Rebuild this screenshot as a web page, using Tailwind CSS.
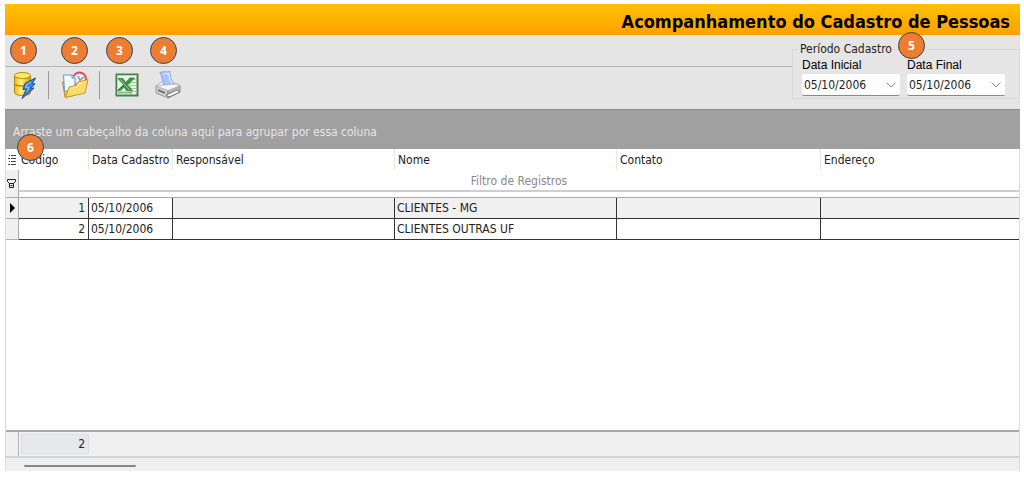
<!DOCTYPE html>
<html lang="pt-BR">
<head>
<meta charset="utf-8">
<meta name="viewport" content="width=device-width, initial-scale=1">
<title>Acompanhamento do Cadastro de Pessoas</title>
<script src="https://cdn.jsdelivr.net/npm/@tailwindcss/browser@4"></script>
</head>
<body class="bg-white font-['Tahoma','DejaVu_Sans_Condensed','Noto_Sans',sans-serif] text-xs text-[#222]">
<div class="flex min-h-screen flex-col pt-1 pr-1 pb-1.5 pl-[5px]">

  <header class="flex h-[31px] items-center justify-end bg-linear-to-b from-[#ffc000] to-[#ffa000] pr-2.5">
    <h1 class="pt-1 text-lg font-bold text-black">Acompanhamento do Cadastro de Pessoas</h1>
  </header>

  <div class="flex h-[74px] bg-[#e5e5e5]">
    <div class="flex-1 pt-[31px]">
      <div class="flex items-center border-t border-[#b4b4b4] pt-1 pl-[5px]" role="toolbar" aria-label="Ações">
        <button type="button" class="relative size-7" aria-label="Atualizar dados">
          <span class="absolute -top-8.5 left-0 flex size-[27px] items-center justify-center rounded-full border border-[#34405a] bg-[#ed7d31] font-['Open_Sans',sans-serif] text-xs font-bold text-white">1</span>
          <svg viewBox="0 0 28 28" class="size-7">
            <defs><linearGradient id="gold" x1="0" x2="1"><stop offset="0" stop-color="#f2b707"/><stop offset=".4" stop-color="#fff08a"/><stop offset="1" stop-color="#d99b00"/></linearGradient></defs>
            <path d="M4.500 4.500v8c0 3 16 3 16 0v-8" fill="url(#gold)" stroke="#b8860b"/>
            <path d="M4.500 13v8.500c0 4 16 4 16 0V13c0 3-16 3-16 0z" fill="url(#gold)" stroke="#b8860b"/>
            <ellipse cx="12.500" cy="4.500" rx="8" ry="3" fill="#ffe96a" stroke="#b8860b"/>
            <path d="M25.500 7 15 12.500l-2 6 3.500-.5-4.500 9.500L24 17l-3.500.3 4.500-4.500-3 .2z" fill="#3d86e0" stroke="#174a9c" stroke-linejoin="round"/>
            <path d="m21 11-4.500 2.500-1 3 3.500-.5-2.500 5" fill="none" stroke="#92c9ff"/>
          </svg>
        </button>
        <span class="mr-3 ml-2.5 h-7 w-px bg-[#999]"></span>
        <button type="button" class="relative size-7" aria-label="Abrir pesquisa">
          <span class="absolute -top-8.5 left-0 flex size-[27px] items-center justify-center rounded-full border border-[#34405a] bg-[#ed7d31] font-['Open_Sans',sans-serif] text-xs font-bold text-white">2</span>
          <svg viewBox="0 0 28 28" class="size-7">
            <path d="M1.500 11 4 26h3l4-13z" fill="#f3c743" stroke="#c18c16"/>
            <circle cx="18.500" cy="8" r="6.500" fill="#e8f0f8" stroke="#df4b4b" stroke-width="2"/>
            <path d="m17 5 2 4 4-3" fill="none" stroke="#8a98aa" stroke-width="1.500"/>
            <path d="M2.500 4h8.500l3 3V20H3.500z" fill="#f5faff" stroke="#6a94ce"/>
            <path d="M11 4v3h3" fill="#b9d4f5" stroke="#6a94ce"/>
            <path d="M4.500 26.500 8 16l7-1.500L17 11l10-2.500-3 13.500z" fill="#fbdb6a" stroke="#c99620" stroke-linejoin="round"/>
            <path d="m9.500 17.500 6.500-1.500 2-3.500 7-2" fill="none" stroke="#fff1a8"/>
          </svg>
        </button>
        <span class="mr-3 ml-2.5 h-7 w-px bg-[#999]"></span>
        <button type="button" class="relative size-7" aria-label="Exportar para Excel">
          <span class="absolute -top-8.5 -left-1.5 flex size-[27px] items-center justify-center rounded-full border border-[#34405a] bg-[#ed7d31] font-['Open_Sans',sans-serif] text-xs font-bold text-white">3</span>
          <svg viewBox="0 0 28 28" class="size-7">
            <rect x="4.500" y="3.500" width="21" height="21" fill="#e9f3e4" stroke="#47804c" stroke-width="2"/>
            <path d="M5.500 23.500v-19h19" fill="none" stroke="#b9d5b5"/>
            <path d="M18 6v17M18 8.500h6M18 11.500h6M18 14.500h6M18 17.500h6M18 20.500h6" stroke="#a7c9a0"/>
            <path d="M6 21.500h14" stroke="#8db887" stroke-width="2"/>
            <path d="M6 7.500h5l2.500 4 4.500-4.500h4.500l-7 7 5 5.500h-6l-2.500-3.500-3.500 3.500H5.500l6-6z" fill="#3d9148" stroke="#2f7a3a" stroke-width=".7"/>
            <path d="m8.500 8.500 9 10.500" stroke="#92c991"/>
          </svg>
        </button>
        <button type="button" class="relative ml-3.5 size-7" aria-label="Imprimir">
          <span class="absolute -top-8.5 -left-1 flex size-[27px] items-center justify-center rounded-full border border-[#34405a] bg-[#ed7d31] font-['Open_Sans',sans-serif] text-xs font-bold text-white">4</span>
          <svg viewBox="0 0 28 28" class="size-7">
            <path d="m2 15 7-5 16 3 1 3-12 5z" fill="#ececec" stroke="#bbb"/>
            <path d="M6 1.500c4-1.500 6 0 10-1 0 5 1 8 4 12.500l-10 1c-2-3-1-8-4-12.500z" fill="#a9c3fa" stroke="#8ba5e6"/>
            <path d="M9 3c3-1 4 0 6-.5 0 4 1 7 3 10" fill="none" stroke="#d8e6ff" stroke-width="1.500"/>
            <path d="m2 15 12 4v8L2 22z" fill="#cdcdcd" stroke="#999"/>
            <path d="m14 19 12-4v6l-12 6z" fill="#b4b4b4" stroke="#888"/>
            <path d="m2 15 8-1 10-1 6 2-12 4.500z" fill="#f4f4f4" stroke="#aaa" stroke-width=".7"/>
            <path d="m12 24 11-5 3 2-11 5z" fill="#fafafa" stroke="#777"/>
            <path d="m4 19 7 3" stroke="#666" stroke-width="1.500"/>
          </svg>
        </button>
      </div>
    </div>

    <fieldset class="relative mt-[7px] h-[57px] w-[228px] border border-[#d9d9d9] pl-[9px]">
      <legend class="-ml-1 px-0.5 text-xs leading-[14px]">Período Cadastro</legend>
      <span class="absolute -top-6 left-[105px] flex size-[27px] items-center justify-center rounded-full border border-[#34405a] bg-[#ed7d31] font-['Open_Sans',sans-serif] text-xs font-bold text-white">5</span>
      <div class="flex gap-[7px]">
        <div class="w-[98px]">
          <label for="inicial" class="block font-['Liberation_Sans',sans-serif] leading-[18px] text-black">Data Inicial</label>
          <div class="relative">
            <select id="inicial" class="block h-[22px] w-full appearance-none rounded-xs border-b border-[#888] bg-white pl-0.5 text-xs"><option>05/10/2006</option></select>
            <svg viewBox="0 0 10 6" class="pointer-events-none absolute top-2 right-1 h-1.5 w-2.5" fill="none" stroke="#888"><path d="m.5.5 4.500 4.500L9.500.5"/></svg>
          </div>
        </div>
        <div class="w-[98px]">
          <label for="final" class="block font-['Liberation_Sans',sans-serif] leading-[18px] text-black">Data Final</label>
          <div class="relative">
            <select id="final" class="block h-[22px] w-full appearance-none rounded-xs border-b border-[#888] bg-white pl-0.5 text-xs"><option>05/10/2006</option></select>
            <svg viewBox="0 0 10 6" class="pointer-events-none absolute top-2 right-1 h-1.5 w-2.5" fill="none" stroke="#888"><path d="m.5.5 4.500 4.500L9.500.5"/></svg>
          </div>
        </div>
      </div>
    </fieldset>
  </div>

  <div class="relative flex h-10 items-center border-t border-[#8e8e96] bg-[#a0a0a0] pt-1 pl-2 text-[#e6e6e6]">
    Arraste um cabeçalho da coluna aqui para agrupar por essa coluna
    <span class="absolute top-6 left-3 flex size-[27px] items-center justify-center rounded-full border border-[#34405a] bg-[#ed7d31] font-['Open_Sans',sans-serif] text-xs font-bold text-white">6</span>
  </div>

  <div class="flex flex-1 flex-col border-x border-[#dcdcdc]">
    <div class="flex-1">
      <table class="w-full table-fixed border-separate border-spacing-0">
        <colgroup><col class="w-[13px]"><col class="w-[70px]"><col class="w-[84px]"><col class="w-[222px]"><col class="w-[222px]"><col class="w-[204px]"><col></colgroup>
        <thead>
          <tr class="h-[21px] text-left">
            <td class="p-0"><svg viewBox="0 0 12 12" class="h-3 w-3" stroke="#444"><path d="M3 1.500h1M2 4.500h2M3 7.500h1M2 10.500h2M5 1.500h5M5 4.500h5M5 7.500h5M5 10.500h5"/></svg></td>
            <th scope="col" class="border-r border-[#e6e6e6] p-0 pl-0.5 font-normal">Código</th>
            <th scope="col" class="border-r border-[#e6e6e6] p-0 pl-[3px] font-normal whitespace-nowrap">Data Cadastro</th>
            <th scope="col" class="border-r border-[#e6e6e6] p-0 pl-[3px] font-normal">Responsável</th>
            <th scope="col" class="border-r border-[#e6e6e6] p-0 pl-[3px] font-normal">Nome</th>
            <th scope="col" class="border-r border-[#e6e6e6] p-0 pl-[3px] font-normal">Contato</th>
            <th scope="col" class="p-0 pl-[3px] font-normal">Endereço</th>
          </tr>
          <tr class="h-[22px]">
            <td class="border-r border-[#aaa] bg-[#f0f0f0] p-0 pt-1.5"><svg viewBox="0 0 12 12" class="h-3 w-3" fill="none" stroke="#222"><path d="M1.500 1.500h8v2l-2 2h-4l-2-2zM3.500 5.500h4v4h-4zM4.500 7.500h2"/></svg></td>
            <td colspan="6" class="border-b-2 border-[#cfcfcf] p-0 pt-0.5 text-center text-[#888]">Filtro de Registros</td>
          </tr>
          <tr class="h-[6px]">
            <td class="border-r border-b border-[#aaa] bg-[#f0f0f0] p-0"></td>
            <td colspan="6" class="border-b border-[#aaa] p-0"></td>
          </tr>
        </thead>
        <tbody>
          <tr class="h-[21px] bg-[#f0f0f0]">
            <td class="border-r border-b border-[#aaa] p-0"><svg viewBox="0 0 12 12" class="h-3 w-3"><path d="M4 1v10l5-5z" fill="#000"/></svg></td>
            <td class="border-r border-b border-[#333] p-0 pr-[3px] text-right">1</td>
            <td class="border-r border-b border-[#333] bg-white p-0 pl-0.5">05/10/2006</td>
            <td class="border-r border-b border-[#333] p-0"></td>
            <td class="border-r border-b border-[#333] p-0 pl-0.5">CLIENTES - MG</td>
            <td class="border-r border-b border-[#333] p-0"></td>
            <td class="border-b border-[#333] p-0"></td>
          </tr>
          <tr class="h-[21px]">
            <td class="border-r border-b border-[#aaa] bg-[#f0f0f0] p-0"></td>
            <td class="border-r border-b border-[#333] p-0 pr-[3px] text-right">2</td>
            <td class="border-r border-b border-[#333] p-0 pl-0.5">05/10/2006</td>
            <td class="border-r border-b border-[#333] p-0"></td>
            <td class="border-r border-b border-[#333] p-0 pl-0.5">CLIENTES OUTRAS UF</td>
            <td class="border-r border-b border-[#333] p-0"></td>
            <td class="border-b border-[#333] p-0"></td>
          </tr>
        </tbody>
      </table>
    </div>
    <div class="flex h-[26px] border-t-2 border-[#a8a8a8] bg-[#f0f0f0]">
      <div class="w-[13px] border-r border-[#b8b8b8]"></div>
      <output class="my-0.5 ml-0.5 flex w-[68px] items-center justify-end border border-[#dcdfe0] bg-[#e5e9ea] pr-[3px]">2</output>
    </div>
    <div class="h-[15px] border-t-2 border-[#d2d2d2] bg-[#f0f0f0] pt-[7px] pl-[18px]">
      <div class="h-0.5 w-28 rounded-full bg-[#888]"></div>
    </div>
  </div>
</div>
</body>
</html>
